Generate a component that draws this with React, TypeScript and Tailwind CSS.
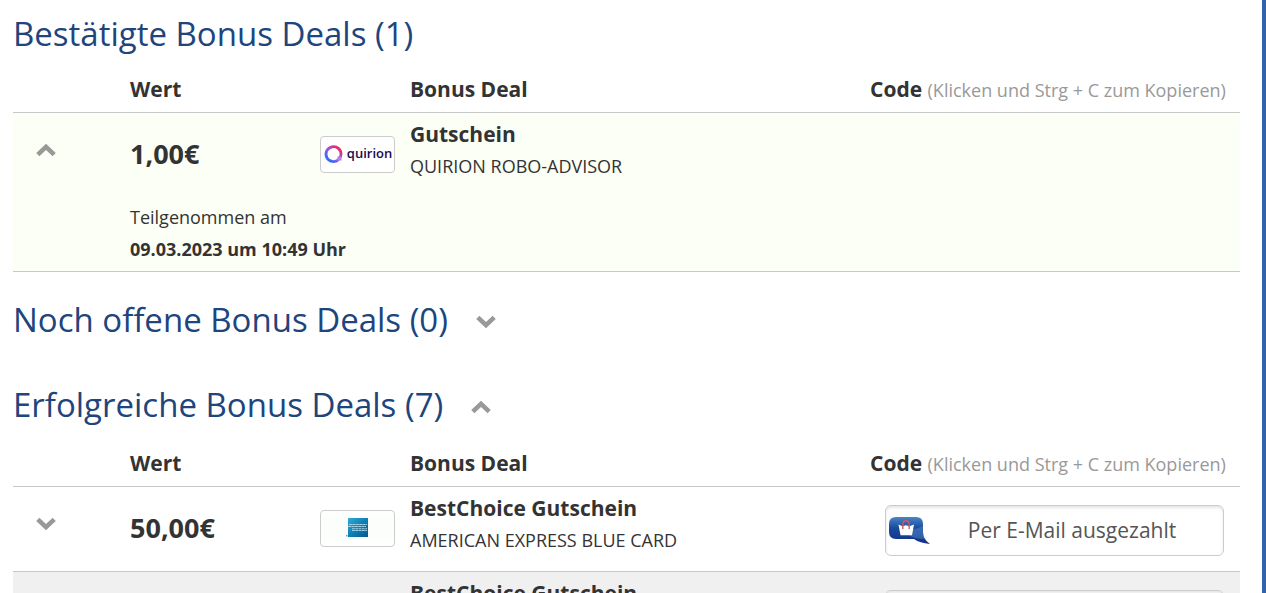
import React from "react";

type Deal = {
  id: string;
  value: string;
  title: string;
  partner: string;
  logo: "quirion" | "amex";
  joined?: string;
  payout?: string;
  open?: boolean;
};

const confirmed: Deal[] = [
  {
    id: "q1",
    value: "1,00€",
    title: "Gutschein",
    partner: "QUIRION ROBO-ADVISOR",
    logo: "quirion",
    joined: "09.03.2023 um 10:49 Uhr",
    open: true,
  },
];

const successful: Deal[] = [
  {
    id: "a1",
    value: "50,00€",
    title: "BestChoice Gutschein",
    partner: "AMERICAN EXPRESS BLUE CARD",
    logo: "amex",
    payout: "Per E-Mail ausgezahlt",
  },
  {
    id: "a2",
    value: "50,00€",
    title: "BestChoice Gutschein",
    partner: "AMERICAN EXPRESS BLUE CARD",
    logo: "amex",
    payout: "Per E-Mail ausgezahlt",
  },
];

function Chevron({ up = false }: { up?: boolean }) {
  return (
    <svg width="20" height="14" viewBox="0 0 20 14" fill="none" stroke="#999" strokeWidth="4.6" aria-hidden="true">
      <path d={up ? "M1.800 11.600 10 3.800 18.200 11.600" : "M1.800 2.400 10 10.200 18.200 2.400"} />
    </svg>
  );
}

function QuirionLogo() {
  return (
    <span className="flex items-center gap-1">
      <svg width="20" height="20" viewBox="0 0 20 20" fill="none" aria-hidden="true" className="mb-0.5">
        <defs>
          <linearGradient id="ring" x1="4" y1="17" x2="16" y2="4" gradientUnits="userSpaceOnUse">
            <stop offset="0" stopColor="#1673f5" />
            <stop offset="0.45" stopColor="#8a5cf0" />
            <stop offset="1" stopColor="#ee2a5c" />
          </linearGradient>
        </defs>
        <path d="M15.6 15.6A7.500 7.500 0 1 1 18 10.500c0 1.5-.8 2.700-1.400 3.500" stroke="url(#ring)" strokeWidth="2.800" />
        <path d="M14.500 12.500h4v4h-4.400z" fill="#b77df0" />
      </svg>
      <span className="pb-1 text-[13px] leading-4 font-semibold text-[#1b0a4a]">quirion</span>
    </span>
  );
}

function AmexLogo() {
  return (
    <svg width="73" height="35" viewBox="0 0 73 35" role="img" aria-label="American Express">
      <defs>
        <linearGradient id="amex" x1="0" y1="0" x2="1" y2="1">
          <stop offset="0" stopColor="#35a9d6" />
          <stop offset="0.5" stopColor="#0f80b4" />
          <stop offset="1" stopColor="#075889" />
        </linearGradient>
      </defs>
      <rect x="0" y="5" width="73" height="23" fill="#fcfefb" />
      <rect x="27" y="7" width="20" height="19" fill="url(#amex)" />
      <path d="M28 13.500h18M27 15.500h18" stroke="#a5d0e4" strokeWidth="1.200" strokeDasharray="3 .4" />
      <path d="M31 17.800h15M31 19.500h15" stroke="#a5d0e4" strokeWidth="1.100" strokeDasharray="2.800 .5" />
      <rect x="25" y="24" width="1.500" height="1.500" fill="#6d9db5" />
    </svg>
  );
}

function BagIcon() {
  return (
    <svg width="42" height="30" viewBox="0 0 42 30" aria-hidden="true">
      <defs>
        <linearGradient id="bubble" x1="0" y1="0" x2="0" y2="1">
          <stop offset="0" stopColor="#4a86c6" />
          <stop offset="0.400" stopColor="#1b4b9d" />
          <stop offset="1" stopColor="#142f86" />
        </linearGradient>
      </defs>
      <path
        d="M7 2h20q7 0 7 7v7c0 6 2 9 7 13-7-1-12-2-16-5H7q-7 0-7-7V9q0-7 7-7z"
        fill="url(#bubble)"
      />
      <path d="M14 14c13 2 16-2 20-3v6c0 3 1 5 2 7-10 0-18-3-22-10z" fill="#5f9bd3" opacity=".4" />
      <path d="M9.500 9.500l4 1.800 3.500-1 3.500 1 4.500-1.800-2 10.700h-11.500z" fill="#fff" />
      <path d="M13.800 14V10q0-4.200 3.200-4.200t3.200 4.200v4" fill="none" stroke="#d8575c" strokeWidth="1.400" />
    </svg>
  );
}

function SectionTitle({ children, toggle }: { children: React.ReactNode; toggle?: "up" | "down" }) {
  return (
    <div className="flex items-center gap-7">
      <h2 className="text-[33px] leading-[48px] text-[#20457c]">{children}</h2>
      {toggle && (
        <button type="button" aria-label="Bereich umschalten" className="pt-1">
          <Chevron up={toggle === "up"} />
        </button>
      )}
    </div>
  );
}

function DealTable({ deals }: { deals: Deal[] }) {
  return (
    <table className="w-full table-fixed border-separate border-spacing-0 text-left text-lg leading-8">
      <colgroup>
        <col className="w-[117px]" />
        <col className="w-[190px]" />
        <col className="w-[90px]" />
        <col />
        <col className="w-[370px]" />
      </colgroup>
      <thead>
        <tr className="text-[21px] leading-8 *:border-b *:border-[#c8c8c8] *:pt-[15px] *:pb-[7px]">
          <td />
          <th scope="col">Wert</th>
          <td />
          <th scope="col">Bonus Deal</th>
          <th scope="col" className="pr-4 text-right whitespace-nowrap">
            Code <span className="text-lg leading-6 font-normal text-[#999]">(Klicken und Strg + C zum Kopieren)</span>
          </th>
        </tr>
      </thead>
      {deals.map((deal, index) => (
        <tbody key={deal.id} className={deal.open ? "bg-[#fcfff5]" : index % 2 ? "bg-[#f0f0f0]" : "bg-white"}>
          <tr className={deal.open ? "*:h-[84px] *:align-top" : "*:h-[85px] *:border-b *:border-[#c8c8c8] *:align-top"}>
            <td className="pt-[30px] pl-[23px]">
              <button type="button" aria-label="Details umschalten" className="block">
                <Chevron up={deal.open} />
              </button>
            </td>
            <td className="pt-[25px] text-[27px] font-bold">{deal.value}</td>
            <td className="pt-[23px]">
              <div className="flex h-[37px] w-[75px] items-center justify-center overflow-hidden rounded-[4px] border border-[#ccc] bg-white">
                {deal.logo === "quirion" ? <QuirionLogo /> : <AmexLogo />}
              </div>
            </td>
            <td className="pt-[5px]">
              <div className="text-[21px] leading-8 font-bold">{deal.title}</div>
              <div>{deal.partner}</div>
            </td>
            <td className="pt-[18px] pr-4">
              {deal.payout && (
                <label className="ml-auto flex h-[51px] w-[339px] items-center rounded-md border border-[#ccc] bg-white pb-0.5 pl-[3px] shadow-[inset_0_2px_3px_rgba(0,0,0,0.1)]">
                  <BagIcon />
                  <input
                    readOnly
                    aria-label="Code"
                    value={deal.payout}
                    className="min-w-0 flex-1 bg-transparent pr-[10px] text-center text-[21px] leading-8 text-[#555] outline-none"
                  />
                </label>
              )}
            </td>
          </tr>
          {deal.joined && (
            <tr className="*:border-b *:border-[#c8c8c8]">
              <td />
              <td colSpan={4} className="pt-1 pb-[6px]">
                <div>Teilgenommen am</div>
                <div className="font-bold">{deal.joined}</div>
              </td>
            </tr>
          )}
        </tbody>
      ))}
    </table>
  );
}

export default function App() {
  return (
    <main className="h-screen overflow-hidden border-r-4 border-[#3263a9] bg-white pt-[10px] pr-[22px] pl-[13px] font-['Open_Sans',sans-serif] text-[#333]">
      <section>
        <SectionTitle>Bestätigte Bonus Deals (1)</SectionTitle>
        <DealTable deals={confirmed} />
      </section>
      <section className="mt-6">
        <SectionTitle toggle="down">Noch offene Bonus Deals (0)</SectionTitle>
      </section>
      <section className="mt-[37px]">
        <SectionTitle toggle="up">Erfolgreiche Bonus Deals (7)</SectionTitle>
        <div className="pt-[3px]">
          <DealTable deals={successful} />
        </div>
      </section>
    </main>
  );
}
